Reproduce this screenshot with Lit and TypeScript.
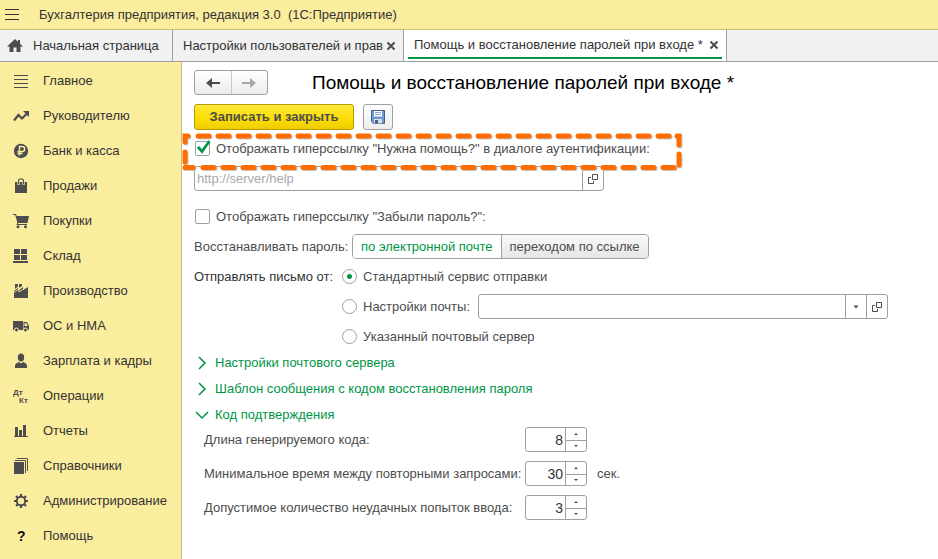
import { LitElement, html, css, svg, nothing } from "lit";
import { customElement, state } from "lit/decorators.js";
import { classMap } from "lit/directives/class-map.js";

const icons: Record<string, unknown> = {
  lines: svg`<path d="M1 2h14v1H1zM1 6h14v1H1zM1 10h14v1H1zM1 14h14v1H1z"/>`,
  trend: svg`<path d="M1 12.500 5.500 7l3.500 3.500 5-5" fill="none" stroke="currentColor" stroke-width="2.200"/><path d="M10 3h6v6z"/>`,
  ruble: svg`<circle cx="8" cy="8" r="7.200"/><path d="M6.500 12.500v-9h2.700a2.400 2.400 0 0 1 0 5H4.500M4.500 10.500h5" fill="none" stroke="#fbed9e" stroke-width="1.400"/>`,
  bag: svg`<path d="M2 4h12v11H2z"/><path d="M5.500 7V3q0-2.500 2.500-2.500T10.500 3v4" fill="none" stroke="#fbed9e" stroke-width="2.400"/><path d="M5.500 6.500V3q0-2.300 2.500-2.300T10.500 3v3.500" fill="none" stroke="currentColor" stroke-width="1.100"/>`,
  cart: svg`<path d="M0 1h3l.7 2H16l-1.500 7H5.300l-.4 1H14v1H3.500l.8-2.500L2.200 2H0z"/><circle cx="5" cy="13.700" r="1.500"/><circle cx="12.500" cy="13.700" r="1.500"/>`,
  store: svg`<path d="M1 1h6v5H1zM8 1h6v5H8zM1 7h6v5H1zM8 7h6v5H8zM0 13h15v2H0z"/>`,
  factory: svg`<path d="M1 15V8l4-3v3l5-4v3l5-3v11z"/><path d="M2 1h3v2.500L2 6zM6 1h3v2L6 5z"/><path d="M1 9.500 6 6v3l9-6" fill="none" stroke="#fbed9e" stroke-width=".8"/>`,
  truck: svg`<path d="M0 3h10v9H0zM10.500 4H14l2 4v4h-5.500z"/><path d="M11.500 5.200h2L14.700 8h-3.200z" fill="#fbed9e"/><g stroke="#fbed9e"><circle cx="3.500" cy="12" r="2"/><circle cx="12.500" cy="12" r="2"/></g>`,
  person: svg`<ellipse cx="8" cy="4.500" rx="3.200" ry="4"/><path d="M2 15v-2q0-3 4-4l2 1.500L10 9q4 1 4 4v2z"/>`,
  posting: svg`<text x="0" y="7" font-size="8" font-weight="bold">Дт</text><text x="6" y="15" font-size="8" font-weight="bold">Кт</text>`,
  chart: svg`<path d="M1 13h14v1H1zM2 4h3v9H2zM6 7h3v6H6zM10 2h3v11h-3z"/>`,
  books: svg`<path d="M1 4h10v12H1z"/><path d="M2 2.500h10.500V15M4 .500h10.500V13" fill="none" stroke="currentColor"/>`,
  gear: svg`<circle cx="8" cy="8" r="4.200" fill="none" stroke="currentColor" stroke-width="2"/><g stroke="currentColor" stroke-width="2.200"><path d="M8 1v3M8 12v3M1 8h3M12 8h3M3 3l2 2M11 11l2 2M3 13l2-2M11 5l2-2"/></g><circle cx="8" cy="8" r="3" fill="#fbed9e"/>`,
  help: svg`<text x="4" y="13" font-size="14" font-weight="bold" fill="#111">?</text>`,
  home: svg`<path d="M8 1 0 8.500h2.500V14h4V9.500h3V14h4V8.500H16L13 5.700V2h-2v1.800z"/>`,
  menu: svg`<path d="M1 2h14v1H1zM1 7h14v1H1zM1 12h14v1H1z"/>`,
  close: svg`<path d="m4.500 4.500 7 7M11.500 4.500l-7 7" fill="none" stroke="currentColor" stroke-width="2"/>`,
  back: svg`<path d="M1 8l6-5v4h8v2H7v4z"/>`,
  forward: svg`<path d="M15 8 9 3v4H1v2h8v4z"/>`,
  save: svg`<path d="M1.500 1.500h13v13h-11l-2-2z" fill="#6f9bd1" stroke="#3f6091"/><path d="M4 2h8v5.500H4z" fill="#fff"/><path d="M5 3.500h6M5 5.500h6" stroke="#8fa9c8"/><path d="M4 10h8v4.500H4z" fill="#d5dce4"/><path d="M5 11h3v3.500H5z" fill="#3f6091"/>`,
  open: svg`<path d="M7.500 3.500h5v5h-5zM6 6.500H3.500v6h5V10" fill="none" stroke="currentColor"/>`,
  drop: svg`<path d="M5.500 6.500h5L8 9.500z"/>`,
  right: svg`<path d="m5 2 6 6-6 6" fill="none" stroke="currentColor" stroke-width="1.500"/>`,
  down: svg`<path d="m2 5 6 6 6-6" fill="none" stroke="currentColor" stroke-width="1.500"/>`,
};

const icon = (name: string) =>
  html`<svg class="icon" viewBox="0 0 16 16" aria-hidden="true">${icons[name]}</svg>`;

const sections = [
  ["lines", "Главное"], ["trend", "Руководителю"], ["ruble", "Банк и касса"],
  ["bag", "Продажи"], ["cart", "Покупки"], ["store", "Склад"],
  ["factory", "Производство"], ["truck", "ОС и НМА"], ["person", "Зарплата и кадры"],
  ["posting", "Операции"], ["chart", "Отчеты"], ["books", "Справочники"],
  ["gear", "Администрирование"], ["help", "Помощь"],
];

const limits = [
  { id: "length", label: "Длина генерируемого кода:", value: 8, unit: "" },
  { id: "delay", label: "Минимальное время между повторными запросами:", value: 30, unit: "сек." },
  { id: "tries", label: "Допустимое количество неудачных попыток ввода:", value: 3, unit: "" },
];

@customElement("app-root")
export class AppRoot extends LitElement {
  @state() private helpLink = true;
  @state() private byMail = true;
  @state() private sender = 0;

  static styles = css`
    :host {
      display: flex;
      flex-direction: column;
      min-height: 100vh;
      font: 13px/16px "Liberation Sans", Arial, sans-serif;
      color: #4d4d4d;
      background: #fff;
    }
    * { box-sizing: border-box; }
    button, input { font: inherit; color: inherit; margin: 0; padding: 0; }
    button { border: 0; background: none; cursor: pointer; }
    a { color: inherit; text-decoration: none; }
    .icon { display: block; flex: none; width: 16px; height: 16px; fill: currentColor; }

    .top {
      display: flex;
      align-items: center;
      gap: 19px;
      height: 30px;
      padding-left: 4px;
      background: #fbed9e;
      border-bottom: 1px solid #c9bc79;
      color: #333;
      white-space: pre;
    }
    .tabs { display: flex; height: 32px; background: #f1f1f1; border-bottom: 1px solid #a0a0a0; color: #333; }
    .tab { display: flex; align-items: center; padding: 0 4px 0 10px; border-right: 1px solid #a0a0a0; white-space: nowrap; }
    .tab.start { width: 173px; padding-left: 7px; }
    .tab.start a { display: flex; gap: 10px; align-items: center; }
    .tab.settings { width: 231px; }
    .tab.active { width: 323px; padding: 0 4px; align-items: flex-start; background: #fff; }
    .tab .name { flex: 1; }
    .mark { flex: 1; display: flex; align-items: center; padding: 3px 0 0 6px; height: 29px; border-bottom: 2px solid #009646; }

    .body { display: flex; flex: 1; }
    .side { flex: none; width: 182px; padding-top: 1px; background: #fbed9e; border-right: 1px solid #c9bc79; color: #333; }
    .side a { display: flex; align-items: center; gap: 14px; height: 35px; padding-left: 13px; }
    .side .icon, .tabs .icon { color: #4d4d4d; }

    .page { flex: 1; min-width: 0; padding: 8px 12px; }
    .head { display: flex; align-items: center; gap: 44px; height: 25px; }
    h1 { margin: 0; font-size: 19px; line-height: 24px; font-weight: normal; color: #000; white-space: nowrap; }
    .history { display: flex; width: 74px; height: 25px; border: 1px solid #a0a0a0; border-radius: 3px; background: linear-gradient(#fff, #ececec); }
    .history button { flex: 1; display: grid; place-items: center; }
    .history button + button { border-left: 1px solid #c8c8c8; color: #a8a8a8; }
    .commands { display: flex; gap: 9px; height: 26px; margin-top: 9px; }
    .primary { width: 160px; border: 1px solid #b59b00; border-radius: 3px; background: linear-gradient(#ffe93c, #fbdc00 60%, #f0cd00); font-weight: bold; }
    .save { width: 30px; display: grid; place-items: center; border: 1px solid #a0a0a0; border-radius: 3px; background: linear-gradient(#fff, #ececec); }

    .check { display: flex; align-items: center; gap: 6px; padding-left: 1px; white-space: nowrap; }
    .check label { padding-top: 2px; }
    .box { display: grid; width: 15px; height: 15px; }
    .box > * { grid-area: 1 / 1; }
    .box input, .radio input { appearance: none; width: 15px; height: 15px; border: 1px solid #a0a0a0; background: #fff; }
    .box input { border-radius: 2px; }
    .box svg { width: 15px; height: 15px; overflow: visible; pointer-events: none; }
    .marked { position: relative; height: 36px; }
    .frame { position: absolute; left: -12px; top: 2px; width: 503px; height: 40px; pointer-events: none; }
    .second { height: 22px; margin: 14px 0 7px; }

    .field { display: flex; height: 25px; border: 1px solid #a0a0a0; border-radius: 3px; background: #fff; overflow: hidden; }
    .field input { flex: 1; min-width: 0; border: 0; outline: 0; padding: 0 2px; background: none; }
    .field input::placeholder { color: #a9a9a9; opacity: 1; }
    .field button { width: 21px; display: grid; place-items: center; border-left: 1px solid #a0a0a0; }
    .url { max-width: 410px; }
    .mailbox { flex: 1; max-width: 410px; }

    .restore { display: grid; grid-template-columns: 158px auto; justify-content: start; align-items: center; height: 25px; white-space: nowrap; }
    .segment { display: flex; height: 25px; border: 1px solid #a0a0a0; border-radius: 4px; overflow: hidden; }
    .segment button { padding: 0 8px; background: linear-gradient(#fafafa, #e6e6e6); }
    .segment button + button { border-left: 1px solid #a0a0a0; }
    .segment .on { background: #fff; color: #009646; }

    .sender { display: grid; grid-template-columns: 148px 1fr; margin-top: 5px; line-height: 25px; white-space: nowrap; }
    .sender > span { color: #333; }
    .options { display: grid; gap: 5px; }
    .option { display: flex; height: 25px; }
    .radio { display: flex; align-items: center; gap: 6px; }
    .radio input { border-radius: 50%; }
    .radio input:checked { background: radial-gradient(circle, #009646 0 2px, #fff 3px); }
    .radio.wide { width: 136px; }

    .group { display: flex; align-items: center; gap: 5px; height: 26px; padding-top: 2px; color: #009646; }
    .limits { display: grid; gap: 9px; padding-left: 10px; }
    .limit { display: grid; grid-template-columns: 321px 62px auto; align-items: center; justify-content: start; white-space: nowrap; }
    .unit { padding-left: 10px; }
    .number input { appearance: textfield; text-align: right; color: #333; font-size: 14px; }
    .number input::-webkit-inner-spin-button { display: none; }
    .steps { display: grid; width: 21px; grid-template-rows: 1fr 1fr; border-left: 1px solid #a0a0a0; }
    .steps button { width: auto; min-height: 0; border: 0; }
    .steps button + button { border-top: 1px solid #a0a0a0; }
    .steps svg { display: block; width: 4px; height: 2px; fill: currentColor; }
  `;

  private dashes() {
    const top: number[] = [], bottom: number[] = [];
    for (let x = 16; x < 490; x += 20) top.push(x);
    for (let x = 21; x < 490; x += 20) bottom.push(x);
    return svg`
      ${top.map((x) => svg`<path d="M${x} 4h11"/>`)}
      ${bottom.map((x) => svg`<path d="M${x} 35.500h11"/>`)}
      <path d="M3 10V4H6M3 20v10M3 35.500h8M495 4h2v9M497 22v11"/>`;
  }

  private group(name: string, open: boolean) {
    return html`<button class="group" aria-expanded=${open}>${icon(open ? "down" : "right")}<span>${name}</span></button>`;
  }

  private radio(index: number, label: string, wide = false) {
    return html`<label class=${classMap({ radio: true, wide })}>
      <input type="radio" name="sender" .checked=${this.sender === index} @change=${() => (this.sender = index)}>${label}</label>`;
  }

  render() {
    return html`
      <header class="top"><button aria-label="Меню">${icon("menu")}</button><span>Бухгалтерия предприятия, редакция 3.0  (1С:Предприятие)</span></header>
      <nav class="tabs" aria-label="Открытые окна">
        <div class="tab start"><a href="#home">${icon("home")}<span>Начальная страница</span></a></div>
        <div class="tab settings"><a class="name" href="#users">Настройки пользователей и прав</a><button aria-label="Закрыть">${icon("close")}</button></div>
        <div class="tab active"><div class="mark"><a class="name" href="#restore">Помощь и восстановление паролей при входе *</a><button aria-label="Закрыть">${icon("close")}</button></div></div>
      </nav>
      <div class="body">
        <nav class="side" aria-label="Разделы">
          ${sections.map(([name, label]) => html`<a href="#${name}">${icon(name)}<span>${label}</span></a>`)}
        </nav>
        <main class="page">
          <div class="head">
            <div class="history"><button aria-label="Назад">${icon("back")}</button><button aria-label="Вперед">${icon("forward")}</button></div>
            <h1>Помощь и восстановление паролей при входе *</h1>
          </div>
          <div class="commands">
            <button class="primary">Записать и закрыть</button>
            <button class="save" aria-label="Записать">${icon("save")}</button>
          </div>
          <div class="check marked">
            <span class="box">
              <input id="help-link" type="checkbox" .checked=${this.helpLink} @change=${() => (this.helpLink = !this.helpLink)}>
              ${this.helpLink ? html`<svg viewBox="0 0 15 15" aria-hidden="true"><path d="m3 6 4 4.500L14.500 0" fill="none" stroke="#009646" stroke-width="2.800"/></svg>` : nothing}
            </span>
            <label for="help-link">Отображать гиперссылку "Нужна помощь?" в диалоге аутентификации:</label>
            <svg class="frame" viewBox="0 0 503 40" fill="none" stroke-width="5" stroke-linecap="round" aria-hidden="true">
              <g stroke="#c4c4c4" transform="translate(1 1)">${this.dashes()}</g>
              <g stroke="#ff6d00">${this.dashes()}</g>
            </svg>
          </div>
          <div class="field url">
            <input type="text" placeholder="http://server/help" aria-label="Адрес страницы помощи">
            <button aria-label="Открыть">${icon("open")}</button>
          </div>
          <div class="check second">
            <span class="box"><input id="forgot-link" type="checkbox"></span>
            <label for="forgot-link">Отображать гиперссылку "Забыли пароль?":</label>
          </div>
          <div class="restore">
            <span id="restore-label">Восстанавливать пароль:</span>
            <div class="segment" role="group" aria-labelledby="restore-label">
              <button class=${classMap({ on: this.byMail })} aria-pressed=${this.byMail} @click=${() => (this.byMail = true)}>по электронной почте</button>
              <button class=${classMap({ on: !this.byMail })} aria-pressed=${!this.byMail} @click=${() => (this.byMail = false)}>переходом по ссылке</button>
            </div>
          </div>
          <div class="sender" role="radiogroup" aria-labelledby="sender-label">
            <span id="sender-label">Отправлять письмо от:</span>
            <div class="options">
              <div class="option">${this.radio(0, "Стандартный сервис отправки")}</div>
              <div class="option">${this.radio(1, "Настройки почты:", true)}
                <div class="field mailbox">
                  <input type="text" aria-label="Настройки почты">
                  <button aria-label="Выбрать">${icon("drop")}</button>
                  <button aria-label="Открыть">${icon("open")}</button>
                </div>
              </div>
              <div class="option">${this.radio(2, "Указанный почтовый сервер")}</div>
            </div>
          </div>
          ${this.group("Настройки почтового сервера", false)}
          ${this.group("Шаблон сообщения с кодом восстановления пароля", false)}
          ${this.group("Код подтверждения", true)}
          <div class="limits">
            ${limits.map((item) => html`<div class="limit">
              <label for=${item.id}>${item.label}</label>
              <div class="field number">
                <input id=${item.id} type="number" .value=${String(item.value)}>
                <div class="steps">
                  <button aria-label="Больше"><svg viewBox="0 0 4 2"><path d="M0 2h4L2 0z"/></svg></button>
                  <button aria-label="Меньше"><svg viewBox="0 0 4 2"><path d="M0 0h4L2 2z"/></svg></button>
                </div>
              </div>
              <span class="unit">${item.unit}</span>
            </div>`)}
          </div>
        </main>
      </div>`;
  }
}
